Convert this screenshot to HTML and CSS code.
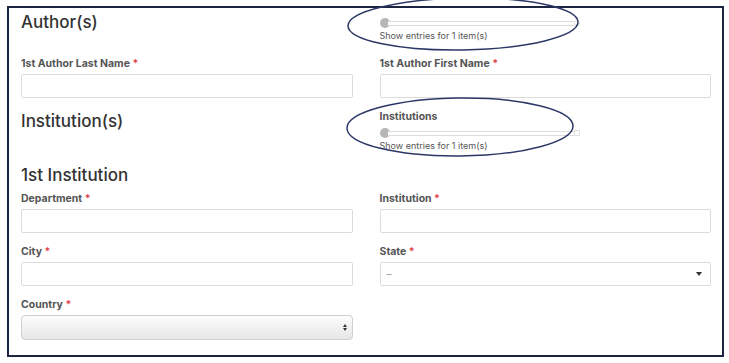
FILE: index.html
```html
<!DOCTYPE html>
<html lang="en">
<head>
    <meta charset="UTF-8">
    <meta name="viewport" content="width=device-width, initial-scale=1.0">
    <title>Authors and Institutions</title>
    <link rel="stylesheet" href="styles.css">
</head>
<body>
    <div class="frame">
        <!-- Authors -->
        <div class="row row-authors">
            <div class="col">
                <h2 class="section-title">Author(s)</h2>
            </div>
            <div class="col">
                <div class="repeater repeater-top">
                    <div class="slider">
                        <span class="slider-handle"></span>
                        <span class="slider-track"></span>
                        <span class="slider-end"></span>
                    </div>
                    <p class="repeater-note">Show entries for 1 item(s)</p>
                </div>
            </div>
        </div>

        <div class="row">
            <div class="field">
                <label>1st Author Last Name <span class="req">*</span></label>
                <div class="input"></div>
            </div>
            <div class="field">
                <label>1st Author First Name <span class="req">*</span></label>
                <div class="input"></div>
            </div>
        </div>

        <!-- Institutions -->
        <div class="row row-institutions">
            <div class="col">
                <h2 class="section-title">Institution(s)</h2>
            </div>
            <div class="col">
                <div class="repeater">
                    <label>Institutions</label>
                    <div class="slider">
                        <span class="slider-handle"></span>
                        <span class="slider-track"></span>
                        <span class="slider-end square"></span>
                    </div>
                    <p class="repeater-note">Show entries for 1 item(s)</p>
                </div>
            </div>
        </div>

        <h3 class="sub-title">1st Institution</h3>

        <div class="row">
            <div class="field">
                <label>Department <span class="req">*</span></label>
                <div class="input"></div>
            </div>
            <div class="field">
                <label>Institution <span class="req">*</span></label>
                <div class="input"></div>
            </div>
        </div>

        <div class="row">
            <div class="field">
                <label>City <span class="req">*</span></label>
                <div class="input"></div>
            </div>
            <div class="field">
                <label>State <span class="req">*</span></label>
                <div class="input select">
                    <span class="placeholder">–</span>
                    <span class="caret"></span>
                </div>
            </div>
        </div>

        <div class="row">
            <div class="field">
                <label>Country <span class="req">*</span></label>
                <div class="input select native">
                    <span class="placeholder"></span>
                    <span class="updown">
                        <span class="up"></span>
                        <span class="down"></span>
                    </span>
                </div>
            </div>
            <div class="field"></div>
        </div>
    </div>

    <!-- hand drawn marks over the sliders -->
    <svg class="marks" width="729" height="363" viewBox="0 0 729 363">
        <ellipse cx="463" cy="24" rx="115" ry="26" transform="rotate(-1 463 24)"></ellipse>
        <ellipse cx="460" cy="127" rx="113" ry="29" transform="rotate(-0.6 460 127)"></ellipse>
    </svg>
</body>
</html>
```

FILE: styles.css
```css
body {
    margin: 0;
    padding: 0;
    background-color: #fff;
    font-family: Inter, "Open Sans", sans-serif;
    color: #333;
    width: 729px;
    height: 363px;
    overflow: hidden;
}

.frame {
    box-sizing: border-box;
    margin: 6px 0 0 7px;
    width: 717px;
    height: 351px;
    border: 2px solid #1b2440;
    padding: 0 11px 0 12px;
}

.row {
    display: flex;
    gap: 27px;
}

.row .col,
.row .field {
    flex: 1;
    min-width: 0;
}

.row-authors {
    height: 49px;
}

.row-institutions {
    height: 41px;
    margin-bottom: 14px;
}

.section-title {
    margin: 3px 0 0;
    font-size: 17px;
    line-height: 22px;
    font-weight: 500;
    color: #333;
}

.row-institutions .section-title {
    margin-top: 0;
}

.sub-title {
    margin: 0 0 6px;
    font-size: 17px;
    line-height: 21px;
    font-weight: 500;
    color: #333;
}

label {
    display: block;
    font-size: 10.5px;
    line-height: 13px;
    font-weight: 700;
    color: #555;
    margin-bottom: 4px;
}

.req {
    color: #e0474c;
}

.field {
    margin-bottom: 12px;
}

.input {
    box-sizing: border-box;
    height: 24px;
    border: 1px solid #dcdcdc;
    border-radius: 2px;
    background: #fff;
}

.select {
    display: flex;
    align-items: center;
    justify-content: space-between;
    padding: 0 8px 0 6px;
}

.select .placeholder {
    font-size: 10px;
    color: #999;
}

.caret {
    width: 0;
    height: 0;
    border-left: 3.5px solid transparent;
    border-right: 3.5px solid transparent;
    border-top: 4px solid #333;
}

.native {
    height: 25px;
    border-color: #cfcfcf;
    border-radius: 4px;
    background: linear-gradient(#fdfdfd, #e6e6e6);
    padding-right: 5px;
}

.updown {
    display: flex;
    flex-direction: column;
    gap: 1px;
}

.updown .up {
    border-left: 2.5px solid transparent;
    border-right: 2.5px solid transparent;
    border-bottom: 3px solid #333;
}

.updown .down {
    border-left: 2.5px solid transparent;
    border-right: 2.5px solid transparent;
    border-top: 3px solid #333;
}

/* repeater slider */
.repeater {
    width: 200px;
}

.repeater label {
    margin: 0 0 5px;
}

.repeater-top {
    padding-top: 10px;
}

.slider {
    display: flex;
    align-items: center;
    height: 10px;
}

.slider-handle {
    flex: none;
    width: 10px;
    height: 10px;
    border-radius: 50%;
    background: #b7b7b7;
}

.slider-track {
    flex: 1;
    height: 3px;
    margin-left: -2px;
    border: 1px solid #dddddd;
    border-left: none;
    border-right: none;
    background: #fff;
}

.slider-end {
    flex: none;
    width: 6px;
    height: 6px;
    border: 1px solid #dddddd;
    border-radius: 50%;
    box-sizing: border-box;
}

.slider-end.square {
    border-radius: 1px;
}

.repeater-note {
    margin: 3px 0 0;
    font-size: 9px;
    line-height: 10px;
    color: #555;
}

.marks {
    position: absolute;
    top: 0;
    left: 0;
    pointer-events: none;
}

.marks ellipse {
    fill: none;
    stroke: #2b3866;
    stroke-width: 1.5;
}
```
